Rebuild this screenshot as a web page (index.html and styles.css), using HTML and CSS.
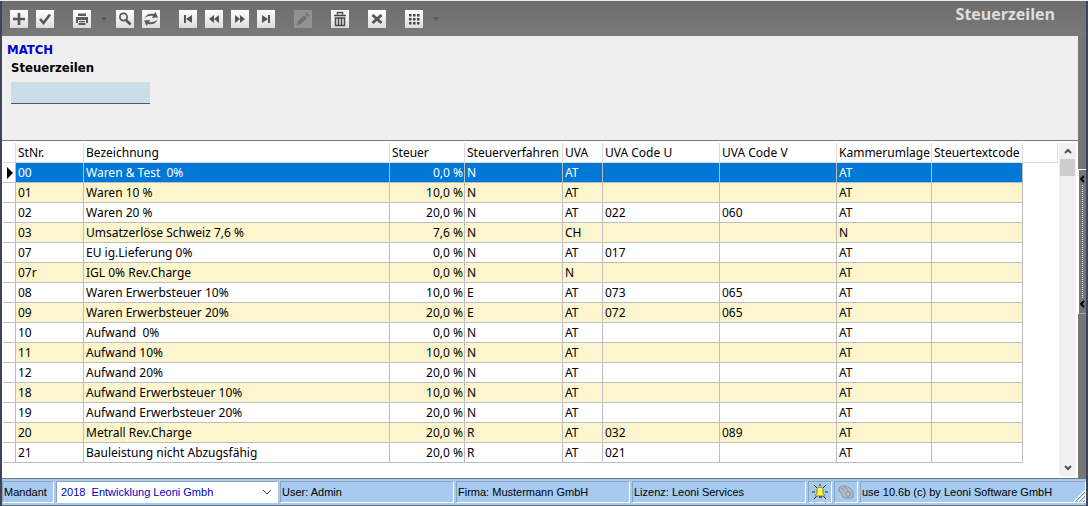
FILE: index.html
```html
<!DOCTYPE html>
<html lang="de">
<head>
    <meta charset="UTF-8">
    <meta name="viewport" content="width=device-width, initial-scale=1.0">
    <title>Steuerzeilen</title>
    <link rel="stylesheet" href="styles.css">
</head>
<body>
    <div class="window">
        <header class="toolbar">
            <div class="tool-group">
                <button class="tool" aria-label="Neu"><svg viewBox="0 0 18 18"><path d="M9 3v12M3 9h12" stroke="#555" stroke-width="2.600"/></svg></button>
                <button class="tool" aria-label="Speichern"><svg viewBox="0 0 18 18"><path d="M4 9l3.500 4L14 4.500" stroke="#555" stroke-width="2.600" fill="none"/></svg></button>
            </div>
            <div class="tool-group">
                <button class="tool" aria-label="Drucken"><svg viewBox="0 0 18 18"><path d="M5 3.500h8v2.500H5zM3 7h12v6h-2v-3H5v3H3zM6 11h6v1.200H6zM5.500 13h7v2h-7z" fill="#5c5c5c"/></svg></button>
                <button class="drop" aria-label="Druckoptionen"><svg viewBox="0 0 6 4"><path d="M0 0h6L3 4z" fill="#585858"/></svg></button>
                <button class="tool" aria-label="Suchen"><svg viewBox="0 0 18 18"><circle cx="7.500" cy="7" r="3.600" fill="none" stroke="#555" stroke-width="1.700"/><path d="M10 10l4.500 4.500" stroke="#555" stroke-width="2.600"/></svg></button>
                <button class="tool" aria-label="Aktualisieren"><svg viewBox="0 0 18 18"><path d="M2.500 8.500C4 4 8 3 12 4l1.500-2L16 7.500l-6 .5 1-2C8 5.500 5 6 2.500 8.500zM15.500 9.500C14 14 10 15 6 14l-1.500 2L2 10.500l6-.5-1 2c3 .5 6 0 8.500-2.500z" fill="#5c5c5c"/></svg></button>
            </div>
            <div class="tool-group">
                <button class="tool" aria-label="Erster"><svg viewBox="0 0 18 18"><path d="M5 5h2v8H5zM13 5v8L7 9z" fill="#555"/></svg></button>
                <button class="tool" aria-label="Zurück"><svg viewBox="0 0 18 18"><path d="M9 5v8L4 9zM14 5v8L9 9z" fill="#555"/></svg></button>
                <button class="tool" aria-label="Weiter"><svg viewBox="0 0 18 18"><path d="M4 5v8l5-4zM9 5v8l5-4z" fill="#555"/></svg></button>
                <button class="tool" aria-label="Letzter"><svg viewBox="0 0 18 18"><path d="M11 5h2v8h-2zM5 5v8l6-4z" fill="#555"/></svg></button>
            </div>
            <div class="tool-group">
                <button class="tool" aria-label="Bearbeiten" disabled><svg viewBox="0 0 18 18"><path d="M3 15l1-4 6-6 3 3-6 6zM11 4l1.500-1.500 3 3L14 7z" fill="#707070"/></svg></button>
            </div>
            <div class="tool-group">
                <button class="tool" aria-label="Löschen"><svg viewBox="0 0 18 18"><path d="M6.500 4.500v-2h5v2M3 5.500h12M4.500 8h9v7.500h-9zM7.500 8v7M10.500 8v7" fill="none" stroke="#484848" stroke-width="1.500"/></svg></button>
            </div>
            <div class="tool-group">
                <button class="tool" aria-label="Abbrechen"><svg viewBox="0 0 18 18"><path d="M4.500 5l9 8M13.500 5l-9 8" stroke="#555" stroke-width="3"/></svg></button>
            </div>
            <div class="tool-group">
                <button class="tool" aria-label="Ansicht"><svg viewBox="0 0 18 18"><path d="M4 4h2.500v2.500H4zM8 4h2.500v2.500H8zM12 4h2.500v2.500H12zM4 8h2.500v2.500H4zM8 8h2.500v2.500H8zM12 8h2.500v2.500H12zM4 12h2.500v2.500H4zM8 12h2.500v2.500H8zM12 12h2.500v2.500H12z" fill="#444"/></svg></button>
                <button class="drop" aria-label="Ansichtsoptionen"><svg viewBox="0 0 6 4"><path d="M0 0h6L3 4z" fill="#585858"/></svg></button>
            </div>
            <h1>Steuerzeilen</h1>
        </header>

        <div class="content">
            <main>
                <form class="match">
                    <h2>MATCH</h2>
                    <label for="match">Steuerzeilen</label>
                    <input type="text" id="match">
                </form>

                <div class="grid">
                    <table>
                        <colgroup>
                            <col class="col-mark">
                            <col class="col-nr">
                            <col class="col-name">
                            <col class="col-tax">
                            <col class="col-method">
                            <col class="col-uva">
                            <col class="col-code">
                            <col class="col-code">
                            <col class="col-levy">
                            <col class="col-text">
                            <col>
                        </colgroup>
                        <thead>
                            <tr><th></th><th>StNr.</th><th>Bezeichnung</th><th>Steuer</th><th>Steuerverfahren</th><th>UVA</th><th>UVA Code U</th><th>UVA Code V</th><th>Kammerumlage</th><th>Steuertextcode</th><th></th></tr>
                        </thead>
                        <tbody>
                            <tr class="selected"><td><svg class="marker" viewBox="0 0 6 12"><path d="M0 0l6 6-6 6z"/></svg></td><td>00</td><td>Waren &amp; Test  0%</td><td>0,0 %</td><td>N</td><td>AT</td><td></td><td></td><td>AT</td><td></td><td></td></tr>
                            <tr><td></td><td>01</td><td>Waren 10 %</td><td>10,0 %</td><td>N</td><td>AT</td><td></td><td></td><td>AT</td><td></td><td></td></tr>
                            <tr><td></td><td>02</td><td>Waren 20 %</td><td>20,0 %</td><td>N</td><td>AT</td><td>022</td><td>060</td><td>AT</td><td></td><td></td></tr>
                            <tr><td></td><td>03</td><td>Umsatzerlöse Schweiz 7,6 %</td><td>7,6 %</td><td>N</td><td>CH</td><td></td><td></td><td>N</td><td></td><td></td></tr>
                            <tr><td></td><td>07</td><td>EU ig.Lieferung 0%</td><td>0,0 %</td><td>N</td><td>AT</td><td>017</td><td></td><td>AT</td><td></td><td></td></tr>
                            <tr><td></td><td>07r</td><td>IGL 0% Rev.Charge</td><td>0,0 %</td><td>N</td><td>N</td><td></td><td></td><td>AT</td><td></td><td></td></tr>
                            <tr><td></td><td>08</td><td>Waren Erwerbsteuer 10%</td><td>10,0 %</td><td>E</td><td>AT</td><td>073</td><td>065</td><td>AT</td><td></td><td></td></tr>
                            <tr><td></td><td>09</td><td>Waren Erwerbsteuer 20%</td><td>20,0 %</td><td>E</td><td>AT</td><td>072</td><td>065</td><td>AT</td><td></td><td></td></tr>
                            <tr><td></td><td>10</td><td>Aufwand  0%</td><td>0,0 %</td><td>N</td><td>AT</td><td></td><td></td><td>AT</td><td></td><td></td></tr>
                            <tr><td></td><td>11</td><td>Aufwand 10%</td><td>10,0 %</td><td>N</td><td>AT</td><td></td><td></td><td>AT</td><td></td><td></td></tr>
                            <tr><td></td><td>12</td><td>Aufwand 20%</td><td>20,0 %</td><td>N</td><td>AT</td><td></td><td></td><td>AT</td><td></td><td></td></tr>
                            <tr><td></td><td>18</td><td>Aufwand Erwerbsteuer 10%</td><td>10,0 %</td><td>N</td><td>AT</td><td></td><td></td><td>AT</td><td></td><td></td></tr>
                            <tr><td></td><td>19</td><td>Aufwand Erwerbsteuer 20%</td><td>20,0 %</td><td>N</td><td>AT</td><td></td><td></td><td>AT</td><td></td><td></td></tr>
                            <tr><td></td><td>20</td><td>Metrall Rev.Charge</td><td>20,0 %</td><td>R</td><td>AT</td><td>032</td><td>089</td><td>AT</td><td></td><td></td></tr>
                            <tr><td></td><td>21</td><td>Bauleistung nicht Abzugsfähig</td><td>20,0 %</td><td>R</td><td>AT</td><td>021</td><td></td><td>AT</td><td></td><td></td></tr>
                        </tbody>
                    </table>
                    <div class="scrollbar">
                        <button aria-label="Nach oben"><svg viewBox="0 0 8 6"><path d="M1 5l3-3 3 3"/></svg></button>
                        <div class="thumb"></div>
                        <button class="down" aria-label="Nach unten"><svg viewBox="0 0 8 6"><path d="M1 1l3 3 3-3"/></svg></button>
                    </div>
                </div>
            </main>
            <aside>
                <button class="splitter" aria-label="Seitenleiste einblenden">
                    <svg viewBox="0 0 5 8"><path d="M4 1L1 4l3 3"/></svg>
                    <span class="dots"></span>
                    <svg viewBox="0 0 5 8"><path d="M4 1L1 4l3 3"/></svg>
                </button>
            </aside>
        </div>

        <footer class="statusbar">
            <label class="panel client" for="client">Mandant</label>
            <div class="panel combo">
                <select id="client"><option>2018&nbsp; Entwicklung Leoni Gmbh</option></select>
                <svg viewBox="0 0 10 6"><path d="M1 1l4 4 4-4"/></svg>
            </div>
            <div class="panel info">User: Admin</div>
            <div class="panel info">Firma: Mustermann GmbH</div>
            <div class="panel info">Lizenz: Leoni Services</div>
            <div class="panel status-icon">
                <svg viewBox="0 0 16 16"><path d="M2 1l3 3M14 1l-3 3M0 8h3M16 8h-3M2 15l3-3M14 15l-3-3M8 0v2" stroke="#222" fill="none"/><path d="M3 12l2-3V6c0-4 6-4 6 0v3l2 3z" fill="#f8f840" stroke="#858040"/><path d="M7 12h3v2H7z" fill="#555"/></svg>
            </div>
            <div class="panel status-icon">
                <svg viewBox="0 0 16 16"><path d="M1 4l3-2h4l4 2 3 4v5l-2 1H7l-3-2V9L1 7z" fill="#b4bcc5" stroke="#8b939c"/><circle cx="10" cy="10" r="2.500" fill="none" stroke="#8b939c"/><path d="M3 4l4 3M6 3l4 3" stroke="#8b939c"/></svg>
            </div>
            <div class="panel version">
                use 10.6b (c) by Leoni Software GmbH
                <svg class="grip" viewBox="0 0 12 12"><path d="M1 12L12 1M5 12l7-7M9 12l3-3" stroke="#fff" stroke-width="2"/><path d="M2 12L12 2M6 12l6-6M10 12l2-2" stroke="#7f8fa5"/></svg>
            </div>
        </footer>
    </div>
</body>
</html>
```
FILE: styles.css
```css
* {
    box-sizing: border-box;
}

body {
    margin: 0;
    background: #3d4656;
    font-family: 'Noto Sans', sans-serif;
    font-size: 12px;
    color: #000;
}

button {
    padding: 0;
    border: none;
    background: none;
}

svg {
    display: block;
}

.window {
    display: flex;
    flex-direction: column;
    min-height: 100vh;
    padding: 1px 2px 0;
    background: linear-gradient(#e8eeee 1px, transparent 1px);
}

/* Toolbar */
.toolbar {
    display: flex;
    align-items: center;
    gap: 19px;
    height: 35px;
    padding-left: 8px;
    background: linear-gradient(#6e6e6e, #797979);
}

.tool-group {
    display: flex;
    align-items: center;
    gap: 8px;
}

.tool {
    width: 18px;
    height: 18px;
    background: linear-gradient(#fff, #dcdce0);
}

.tool:disabled {
    background: #929292;
}

.drop {
    width: 9px;
}

.drop svg {
    width: 6px;
    height: 4px;
    margin: 0 auto;
}

.toolbar h1 {
    margin: 0 31px 10px auto;
    font-family: 'Open Sans', sans-serif;
    font-size: 16px;
    line-height: 20px;
    color: #dedede;
}

/* Content */
.content {
    display: flex;
    flex: 1;
    background: #767676;
}

main {
    display: flex;
    flex: 1;
    flex-direction: column;
    min-width: 0;
}

.match {
    display: flex;
    flex-direction: column;
    align-items: flex-start;
    height: 104px;
    padding: 5px 9px;
    background: #efefef;
    font-family: 'DejaVu Sans Condensed', sans-serif;
    font-size: 13px;
    font-weight: bold;
    line-height: 18px;
}

.match h2 {
    margin: 0 0 0 -4px;
    font-size: 13px;
    color: #0000d8;
}

.match input {
    width: 139px;
    height: 22px;
    margin-top: 5px;
    border: none;
    border-bottom: 1px solid #4d5a66;
    background: #cbdde6;
}

.grid {
    display: flex;
    flex: 1;
    padding: 2px 2px 2px 1px;
    border-top: 1px solid #777;
    border-bottom: 1px solid #777;
    background: #fff;
}

table {
    flex: 1;
    align-self: flex-start;
    width: 100%;
    border-collapse: separate;
    border-spacing: 0;
    table-layout: fixed;
}

.col-mark { width: 13px; }
.col-nr { width: 68px; }
.col-name { width: 306px; }
.col-tax { width: 75px; }
.col-method { width: 98px; }
.col-uva { width: 40px; }
.col-code { width: 117px; }
.col-levy { width: 95px; }
.col-text { width: 91px; }

th,
td {
    height: 20px;
    padding: 0 2px;
    border-right: 1px solid #bdbdbd;
    border-bottom: 1px solid #bdbdbd;
    font-weight: normal;
    line-height: 19px;
    text-align: left;
    white-space: pre;
}

th {
    border-color: #ddd;
}

td:nth-child(4) {
    padding-right: 1px;
    text-align: right;
}

tbody tr:nth-child(even) td {
    background: #fdf5cd;
}

tbody .selected td {
    background: #0078d7;
    color: #fff;
}

tbody tr td:first-child,
tbody tr td:last-child,
tbody tr:nth-child(even) td:first-child,
tbody tr:nth-child(even) td:last-child {
    background: #fff;
}

tbody tr td:first-child {
    padding: 0 4px;
}

tbody tr td:last-child {
    border: none;
}

.marker {
    width: 6px;
    height: 12px;
}

.scrollbar {
    display: flex;
    flex-direction: column;
    width: 17px;
    margin-left: 1px;
    background: #f0f0f0;
}

.scrollbar button {
    width: 17px;
    height: 16px;
}

.scrollbar svg {
    width: 8px;
    height: 6px;
    margin: 0 auto;
    fill: none;
    stroke: #505050;
    stroke-width: 2;
}

.scrollbar .down {
    margin-top: auto;
}

.thumb {
    width: 15px;
    height: 17px;
    margin: 0 auto;
    background: #cdcdcd;
}

aside {
    width: 8px;
    padding-top: 133px;
}

.splitter {
    display: flex;
    flex-direction: column;
    align-items: center;
    gap: 2px;
    width: 8px;
    height: 145px;
    padding: 5px 0;
    border-top: 1px solid #fff;
    border-left: 1px solid #fff;
    border-bottom: 1px solid #aaa;
}

.splitter svg {
    width: 5px;
    height: 8px;
    fill: none;
    stroke: #000;
    stroke-width: 2;
}

.dots {
    flex: 1;
    border-left: 1px dotted #e4e4e4;
}

/* Status bar */
.statusbar {
    display: flex;
    gap: 2px;
    height: 27px;
    padding: 2px 0;
    border-bottom: 1px solid #6a6a6a;
    background: #a6caf0;
    font-family: 'Liberation Sans', sans-serif;
    font-size: 11px;
}

.panel {
    display: flex;
    align-items: center;
    padding: 0 1px;
    border: 1px solid;
    border-color: #8fa5bd #fff #fff #8fa5bd;
    white-space: nowrap;
}

.client {
    width: 52px;
}

.combo {
    position: relative;
    width: 222px;
    padding: 0;
}

.combo select {
    width: 100%;
    height: 100%;
    padding: 0 4px;
    border: none;
    appearance: none;
    background: #fff;
    font: inherit;
    color: #0000c0;
}

.combo svg {
    position: absolute;
    right: 5px;
    width: 10px;
    height: 6px;
    fill: none;
    stroke: #444;
    pointer-events: none;
}

.info {
    width: 174px;
}

.status-icon {
    justify-content: center;
    width: 24px;
}

.status-icon svg {
    width: 16px;
    height: 16px;
    flex: none;
}

.version {
    flex: 1;
    padding-right: 0;
}

.grip {
    align-self: flex-end;
    width: 12px;
    height: 12px;
    margin-left: auto;
}
```
